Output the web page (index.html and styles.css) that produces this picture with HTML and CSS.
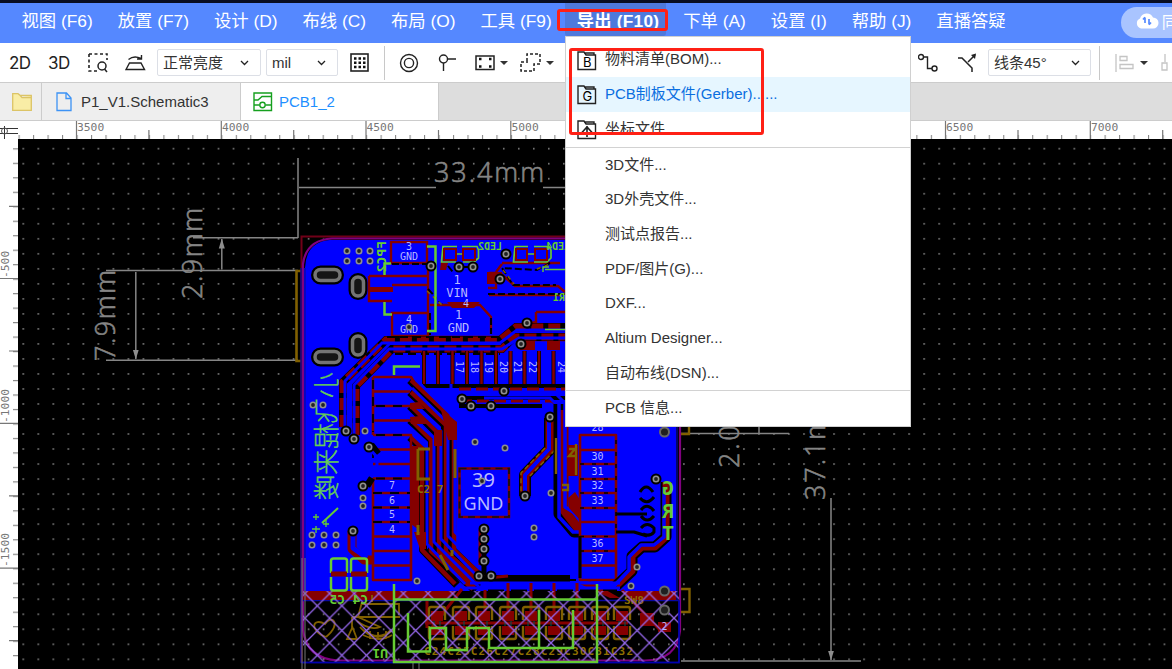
FILE: index.html
```html
<!DOCTYPE html>
<html lang="zh-CN">
<head>
<meta charset="utf-8">
<title>PCB1_2</title>
<link rel="stylesheet" href="styles.css">
</head>
<body>
<div class="app">
<nav class="menubar">
<span>视图 (F6)</span><span>放置 (F7)</span><span>设计 (D)</span><span>布线 (C)</span><span>布局 (O)</span><span>工具 (F9)</span><span class="current"><b>导出 (F10)</b></span><span>下单 (A)</span><span>设置 (I)</span><span>帮助 (J)</span><span>直播答疑</span>
<div class="sync"><svg width="24" height="18" viewBox="0 0 24 18"><path d="M6 16.5A5.3 5.3 0 0 1 5 6.5A7 7 0 0 1 18 5.5A5.5 5.5 0 0 1 18 16.5Z" fill="#fff"/><path d="M10 11V5.500M8 7.500L10 5.300M14 7V12.500M14 12.700L16 10.500" stroke="#568aff" stroke-width="1.700" fill="none"/></svg><em>同步</em></div>
</nav>
<div class="toolbar">
<div class="tools">
<span class="dim d2">2D</span><span class="dim">3D</span>
<svg class="i-find" width="20" height="20" viewBox="0 0 20 20"><path d="M1 1H19V7M1 1V18H9" fill="none" stroke="#222" stroke-width="1.600" stroke-dasharray="3 2.500"/><circle cx="14" cy="13" r="4" fill="none" stroke="#222" stroke-width="1.500"/><path d="M16.500 16L19 19" stroke="#222" stroke-width="1.500"/></svg>
<svg class="i-flip" width="21" height="16" viewBox="0 0 21 16"><path d="M4.500 8H16L19.500 14.500H1ZM3.500 4.500Q9 0 16 3.500M16.500 0V4H12" fill="none" stroke="#222" stroke-width="1.400"/></svg>
<div class="select s1">正常亮度<svg width="9" height="6"><path d="M1 1L4.500 4.500L8 1" fill="none" stroke="#222" stroke-width="1.300"/></svg></div>
<div class="select s2">mil<svg width="9" height="6"><path d="M1 1L4.500 4.500L8 1" fill="none" stroke="#222" stroke-width="1.300"/></svg></div>
<svg class="i-grid" width="19" height="19"><rect x="1" y="1" width="17" height="17" fill="none" stroke="#222" stroke-width="1.600"/><path d="M4 5.500H16M4 9.800H16M4 14H16" stroke="#111" stroke-width="2.500" stroke-dasharray="2.500 2"/></svg>
<i class="sep"></i>
<svg class="i-via" width="20" height="20"><circle cx="10" cy="10" r="8.500" fill="none" stroke="#222" stroke-width="1.400"/><circle cx="10" cy="10" r="4.600" fill="none" stroke="#222" stroke-width="1.400"/></svg>
<svg class="i-pin" width="19" height="18"><circle cx="5.500" cy="5" r="4" fill="none" stroke="#222" stroke-width="1.400"/><path d="M9.500 5H18M5.500 9V17" stroke="#222" stroke-width="1.400"/></svg>
<svg class="i-rect" width="20" height="16"><rect x="1" y="1" width="18" height="13.500" fill="none" stroke="#222" stroke-width="1.500"/><path d="M4 4H6.500M14 4H16.500M4 11.500H6.500M14 11.500H16.500" stroke="#111" stroke-width="2.500"/></svg><i class="caret"></i>
<svg class="i-dash" width="21" height="19"><path d="M7 8V1H20V11H14V18H1V9H8" fill="none" stroke="#222" stroke-width="1.500" stroke-dasharray="3 2"/></svg><i class="caret"></i>
</div>
<div class="tools right">
<svg width="20" height="19"><circle cx="3" cy="4" r="2.500" fill="none" stroke="#222" stroke-width="1.400"/><circle cx="16.500" cy="15.500" r="2.500" fill="none" stroke="#222" stroke-width="1.400"/><path d="M5.500 4H9.500V15.500H14" fill="none" stroke="#222" stroke-width="1.400"/></svg>
<svg class="i-bend" width="20" height="20"><path d="M1 5H5L15 15V19M11 9L18 2" fill="none" stroke="#222" stroke-width="1.500"/><path d="M14 2L19 .5L18 6Z" fill="#222"/></svg>
<div class="select s3">线条45°<svg width="9" height="6"><path d="M1 1L4.500 4.500L8 1" fill="none" stroke="#222" stroke-width="1.300"/></svg></div>
<i class="sep"></i>
<svg class="i-align" width="20" height="18"><path d="M1 0V18M5 2.500H12V6.500H5ZM5 10.500H18V14.500H5Z" fill="none" stroke="#c4c4c4" stroke-width="1.300"/></svg><i class="caret"></i>
<svg class="i-dist" width="11" height="18"><path d="M4 0V8M1 9H6V16H1Z" fill="none" stroke="#c4c4c4" stroke-width="1.300"/></svg>
</div>
</div>
<div class="tabs">
<div class="tab folder"><svg width="20" height="20"><path d="M.7 18.300V1.700H6L8 3.300H19.300V18.300ZM8 3.300L10 5.500H19" fill="#f9eda6" stroke="#dcc466" stroke-width="1.300"/></svg></div>
<div class="tab doc"><svg width="16" height="20"><path d="M1 1H10.500L15 6V18.500H1ZM10 1V6.500H15" fill="none" stroke="#3d93f5" stroke-width="1.300"/></svg>P1_V1.Schematic3</div>
<div class="tab doc active"><svg width="20" height="20"><path d="M1 1H18.500V18.500H1ZM1 8H5L9 4.500H18M1 13H6.500M12.500 13H18" fill="none" stroke="#16a01f" stroke-width="1.400"/><circle cx="9.500" cy="13" r="2.700" fill="none" stroke="#16a01f" stroke-width="1.400"/></svg>PCB1_2</div>
</div>
<svg class="stage" width="1172" height="549" viewBox="0 120 1172 549">
<defs>
<pattern id="dots" x="15.900" y="141.200" width="15.015" height="15.020" patternUnits="userSpaceOnUse"><rect x="6.600" y="6.700" width="1.500" height="1.500" fill="#909090"/></pattern>
<pattern id="th" x="4.100" y="121" width="14.480" height="18" patternUnits="userSpaceOnUse"><path d="M0.500 14V18" stroke="#888" stroke-width="1.200"/></pattern>
<pattern id="tv" x="0" y="133.800" width="18" height="14.480" patternUnits="userSpaceOnUse"><path d="M13 .6H18" stroke="#888" stroke-width="1.200"/></pattern>
<pattern id="hatch" x="305" y="593.500" width="24.600" height="24.700" patternUnits="userSpaceOnUse"><path d="M0 0L24.600 24.700M24.600 0L0 24.700" stroke="#9365e8" stroke-width="1.300"/><path d="M-2 2L2 -2M22.600 26.700L26.600 22.700M-2 22.700L2 26.700M22.600 -2L26.600 2" stroke="#9365e8" stroke-width="1.300"/></pattern>
<marker id="ar" viewBox="0 0 10 7" refX="9.500" refY="3.500" markerWidth="10" markerHeight="7" markerUnits="userSpaceOnUse" orient="auto-start-reverse"><path d="M0 .5L10 3.500L0 6.500Z" fill="#8e8e8e"/></marker>
<g id="via"><circle r="2.700" fill="#222" stroke="#909090" stroke-width="1.600"/></g>
<g id="bvia"><circle r="5.500" fill="#000"/><use href="#via"/></g>
<g id="cap"><path d="M1 14V3Q1 1 3 1H15Q17 1 17 3V14M1 20V31Q1 33 3 33H15Q17 33 17 31V20" fill="none" stroke="#806000" stroke-width="2.400"/><path d="M3 5H15V15H3ZM3 20H15V29H3Z" fill="#850000"/><path d="M6 15V20M12 15V20" stroke="#055" stroke-width="1"/></g>
</defs>
<rect x="0" y="120" width="1172" height="549" fill="#fff"/>
<rect x="18" y="139" width="1154" height="530" fill="#000"/>
<rect x="18" y="139" width="1154" height="530" fill="url(#dots)"/>
<path d="M0 120.500H1172" stroke="#ccc"/>
<rect x="18" y="121" width="1154" height="18" fill="url(#th)"/><rect x="0" y="139" width="18" height="530" fill="url(#tv)"/>
<path d="M76.500 121V139M221.300 121V139M366 121V139M510.800 121V139M945.500 121V139M1090.300 121V139M0 278.500H18M0 423.300H18M0 568.100H18M148.900 130V139M293.700 130V139M438.500 130V139M1018 130V139M1162.700 130V139M9 206.300H18M9 351H18M9 495.800H18M9 640.600H18" stroke="#777" stroke-width="1.200"/>
<g class="rule"><text x="77" y="131">3500</text><text x="222" y="131">4000</text><text x="366.500" y="131">4500</text><text x="511.500" y="131">5000</text><text x="946" y="131">6500</text><text x="1091" y="131">7000</text>
<text transform="translate(9 278) rotate(-90)">-500</text><text transform="translate(9 423) rotate(-90)">-1000</text><text transform="translate(9 567) rotate(-90)">-1500</text></g>
<path d="M0 128.500H18M0 133.500H18M4.500 126V139" stroke="#333" stroke-width="1"/><circle cx="4.500" cy="131" r="3" fill="none" stroke="#555"/>

<g stroke="#858585" stroke-width="1.500" fill="none">
<path d="M298 158V238M193 237.700H298M106 270.600H298M106 360.300H298M680 433.500H789M680 661H861"/>
<path d="M436 187.500H299M543 187.500H720" marker-end="url(#ar)"/><path d="M221.800 239V269.500M135.800 272V359" marker-start="url(#ar)" marker-end="url(#ar)"/><path d="M759 410V433M831 498V660" marker-end="url(#ar)"/>
</g>
<g class="dimtext"><text x="434" y="182" textLength="110">33.4mm</text><text transform="translate(202 299) rotate(-90)" textLength="91">2.9mm</text><text transform="translate(115 361) rotate(-90)" textLength="91">7.9mm</text><text transform="translate(739 468) rotate(-90)" textLength="96">2.0mm</text><text transform="translate(825 500) rotate(-90)" textLength="110">37.1mm</text></g>
<path d="M301 271H296.500V361H301" fill="none" stroke="#806000" stroke-width="2.600"/>
<path d="M680 434H689V425M676 589H689.500V612H680M675 600V627" fill="none" stroke="#806000" stroke-width="2.400"/>

<path d="M301.500 262Q303 239 334 237H681V662H302Z" fill="#000"/>
<path d="M305 268Q306 242 330 240H676V591H303V268Z" fill="#0000ff"/>
<path d="M301.500 662V236.500H682" fill="none" stroke="#700018" stroke-width="2"/>
<path d="M303 264Q306 240 332 238.500H680V631Q677 660 645 660.500H338Q307 659 303 630Z" fill="none" stroke="#800080" stroke-width="2.200"/>
<path d="M305 268V600M302.500 600.500H679V662.500H301V268M677 240V600" stroke="#0808a0" stroke-width="1.300" fill="none"/>
<path d="M303 591H457L448 600H303ZM624 591H676V600H632Z" fill="#850000"/>
<rect x="303" y="601" width="374" height="60" fill="url(#dots)"/>

<g fill="#151515" stroke="#000" stroke-width="8"><rect x="315" y="269.500" width="25" height="11" rx="5.500"/><rect x="315" y="351.500" width="25" height="11" rx="5.500"/><rect x="352.500" y="277" width="11" height="19" rx="5.500"/><rect x="352.500" y="336" width="11" height="19" rx="5.500"/></g>
<g fill="#151515" stroke="#747474" stroke-width="3.500"><rect x="315" y="269.500" width="25" height="11" rx="5.500"/><rect x="315" y="351.500" width="25" height="11" rx="5.500"/><rect x="352.500" y="277" width="11" height="19" rx="5.500"/><rect x="352.500" y="336" width="11" height="19" rx="5.500"/></g>

<!-- upper area -->
<g fill="none" stroke="#850000" stroke-width="2.400">
<path d="M391 242H427V263H391ZM369 276H427M369 276V301H392M369 289H392M392 285H427M392 313H428V336H392ZM428 263V313M489 273H496V288L488 288M489 295H560M502 263H560M496 272L502 264M500 273L515 286H558L565 292M430 305H480L491 317V334M392 337H500L512 330H565M536 312H565M536 312V322L510 328M520 340H565"/>
</g>
<path d="M368 287H393V292H368ZM447 302H480L474 308H452ZM487 272H502V284H487ZM441 262L448 263L446 270H440ZM520 341H535V350H520ZM547 341H560V350H547Z" fill="#850000"/>
<path d="M392 264H427M428 289L442 304M430 313V335M448 266L456 276M464 267H476M550 263L537 270L502 268L513 285H556M491 318V334M488 294H565" fill="none" stroke="#000" stroke-width="2" stroke-dasharray="7 3"/>
<path d="M427 291L442 305M503 270L514 284M537 269L550 264" stroke="#806000" stroke-width="1.500" stroke-dasharray="4 4" fill="none"/>
<g fill="none"><path d="M343 427V382L386 340H500L516 327H565M356 435V386L392 349H502L514 337H565" stroke="#000" stroke-width="8"/><path d="M343 427V382L386 340H500L516 327H565M356 435V386L392 349H502L514 337H565" stroke="#850000" stroke-width="7" stroke-dasharray="12 5"/><path d="M345 430V381L382 343H500L517 330H565M354 439V385L389 349H502L519 338H565" stroke="#0000ff" stroke-width="3"/><path d="M387 337H498M395 354H500" stroke="#000" stroke-width="2" stroke-dasharray="8 5"/></g>
<rect x="437" y="273" width="50" height="28" fill="#0000ff"/>
<g stroke="#000" stroke-width="4"><path d="M424 351V384M438 351V384M452.500 351V384M467 351V384M481.500 351V384M496 351V384M510.500 351V384M524.500 351V384M539 351V384M553.500 351V384"/></g>
<g stroke="#850000" stroke-width="2.500"><path d="M424 351V384M438 351V384M452.500 351V384M467 351V384M481.500 351V384M496 351V384M510.500 351V384M524.500 351V384M539 351V384M553.500 351V384"/></g>
<path d="M423 386H565M457 398H565M459 406H542" fill="none" stroke="#000" stroke-width="4"/><path d="M459 389H565M460 401H552L564 411" fill="none" stroke="#850000" stroke-width="3" stroke-dasharray="12 5"/><path d="M459 393H555L566 404M484 398H550L562 410" stroke="#0000ff" stroke-width="3" fill="none"/>

<!-- left pads and routes -->
<g fill="none" stroke-linejoin="round">
<path d="M410 380L452 420V550L482 579H570M410 392L445 425V552L481 584M410 406L438 434V552L478 588M410 420L432 440V551L475 590M410 437L423 449V550L457 585" stroke="#000" stroke-width="8"/>
<path d="M411 380L454 420V550L483 577M411 392L446 425V552L480 582M411 406L439 434V552L476 586M411 420L431 440V551L473 589M411 437L422 448V550L455 584" stroke="#850000" stroke-width="4.500"/>
<path d="M412 376L455 418V532L485 564M412 388L448 423V536L483 571M411 402L441 431V539L480 579M411 417L434 438V542L480 588M411 433L427 448V544L465 584M451 384V415L457 421" stroke="#0000ff" stroke-width="3"/>
<path d="M373 377H411L414 382M373 377V435M373 391.500H410M373 406H410M373 420.500H410M373 435H411V580H373V478M373 449.500H410M373 464H410M373 478.500H410M373 493H410M373 507.500H410M373 522H410M373 536.500H410M373 551H410M373 565.500H410" stroke="#850000" stroke-width="2.600"/>
<path d="M373 380V432M376 406H408M376 435H408M376 478.500H410M373 493H410M373 507.500H410M373 522H410M373 449V464" stroke="#000" stroke-width="1.800" stroke-dasharray="9 8"/>
<path d="M371 445L378 454M367 486L372 478" stroke="#000" stroke-width="7"/>
<path d="M368 447L377 457V466L363 480" stroke="#0000ff" stroke-width="3"/>
<path d="M352 531V549L364 560H373" stroke="#850000" stroke-width="9"/><path d="M353 532V548L367 558" stroke="#0000ff" stroke-width="5"/>
</g>
<path d="M410 403L419 402L425 409H410ZM410 417L420 416L427 424H411ZM411 446H419V530L411 524ZM414 532H426V549H420ZM434 430H442V446H434ZM441 410L457 422V440H448Z" fill="#850000"/>
<path d="M418 449V479H430M418 449H430M418 452V478M455 449V478M418 525V535M440 555L448 570M452 550V556" fill="none" stroke="#806000" stroke-width="3"/>
<g stroke="#000" stroke-width="5"><path d="M484 530V575"/></g><path d="M480 530V565M487 578L508 576" stroke="#850000" stroke-width="3"/>
<path d="M459.500 468.500H509V517H459.500Z" fill="#0000ff" stroke="#850000" stroke-width="2.500"/><path d="M459.500 468.500H509V517H459.500Z" fill="none" stroke="#111" stroke-width="1.700" stroke-dasharray="7 5"/>

<!-- right pads and routes -->
<g fill="none" stroke-linejoin="round">
<path d="M550 418V449L525 475V496" stroke="#000" stroke-width="12"/><path d="M550 418V449L525 475V496" stroke="#850000" stroke-width="9"/><path d="M545 448L521 473V494M555 450L530 476" stroke="#806000" stroke-width="1.500" stroke-dasharray="5 3"/><path d="M549 418V449L525 475V494" stroke="#0000ff" stroke-width="4"/>
<path d="M559 404V514L574 532H580" stroke="#000" stroke-width="11"/><path d="M564 410V510L577 527H580" stroke="#850000" stroke-width="9"/><path d="M559 404V517L573 532H580M565 404V507L578 515H640" stroke="#0000ff" stroke-width="3.500"/>
<path d="M580 435H616V450H580ZM580 450V580H616V435M580 464H616M580 479H616M580 493H616M580 508H616M580 522H616M580 536.500H616M580 551H616M580 565.500H616" stroke="#850000" stroke-width="2.600"/>
<path d="M580 464H616M580 479H616M580 493H616M580 508H616M580 536.500H616M580 551H616M616 440V530" stroke="#000" stroke-width="1.500" stroke-dasharray="4 8"/>
<path d="M616 514H647M616 532H634L647 536M580 536V578" stroke="#000" stroke-width="3"/>
<path d="M640 492Q646 482 653 492M640 498Q647 506 654 497M641 510Q647 502 654 511M641 516Q647 524 654 516M641 528Q647 521 654 528V532Q650 537 643 534" stroke="#000" stroke-width="3"/>
<path d="M666 482V537L655 547H642L632 556V571L616 586" stroke="#000" stroke-width="11"/><path d="M666 482V537L655 547H642L632 556V571L616 586" stroke="#850000" stroke-width="7"/><path d="M664 487V537L654 545H641L629 557V570L614 586" stroke="#0000ff" stroke-width="3.500"/>
</g>
<path d="M567 445H578V476H568ZM568 498L575 492L580 500V520L569 508ZM590 581L620 598H610L580 584Z" fill="#850000"/>
<path d="M556 438V474M576 444V475M569 449H575L569 456H575M562 485H568V490H562" fill="none" stroke="#806000" stroke-width="2.300"/>
<path d="M476 580H576M488 590H617" stroke="#000" stroke-width="2" stroke-dasharray="16 7"/><path d="M470 583H620M460 588H620" stroke="#0000ff" stroke-width="3"/>

<!-- lower area -->
<path d="M485 590V616M508 583V616M531 583V616M554 583V616M577 583V616M462 589L430 630M427 601V628M622 590L660 630M425 623H628" stroke="#850000" stroke-width="3" fill="none"/>
<use href="#cap" x="428" y="606"/><use href="#cap" x="452" y="606"/><use href="#cap" x="475" y="606"/><use href="#cap" x="499" y="606"/><use href="#cap" x="522" y="606"/><use href="#cap" x="545" y="606"/><use href="#cap" x="568" y="606"/><use href="#cap" x="591" y="606"/><use href="#cap" x="613" y="606"/>
<path d="M640 613H654V626H640ZM658 622H671V632H658Z" fill="#850000"/>
<path d="M326 637C308 630 313 617 325 624C331 614 343 623 326 637M352 617H400M362 602L358 617L380 627Q370 631 357 621M361 604H399V614M360 627Q376 646 395 628M352 617V628L347 639H357L352 626M363 630Q379 642 391 630M363 635Q380 643 392 635M370 631V639M378 632V640M386 631V639M372 595V602" fill="none" stroke="#806000" stroke-width="1.800"/>
<g class="refs"><text x="424" y="655" textLength="209">C24C25C26C27C28C29C30C31C32</text><text x="624" y="604">SW8</text><text x="417" y="493">C2 7</text></g>
<path d="M303 591H679V662H303Z" fill="url(#hatch)"/>
<path d="M302 662.500H679V600.500" stroke="#0000b0" stroke-width="1.500" fill="none"/>
<path d="M302 669V558M305 669V558M413 663V669M419 663V669" stroke="#777" stroke-width="1"/>

<g fill="none" stroke="#66cc33" stroke-width="2.500">
<path d="M394 584V662H597V584M394 599.500H597M408 613V651.500H430V628H446V650H467V628H489V648H573V610M539 610V648"/>
<path d="M391 263.500H384.500V275M384.500 302V314.500H392M427 246.500H435.500V331H427M394 375V366.500H420"/>
<path d="M331 573V561Q331 558.500 333.500 558.500H344.500Q347 558.500 347 561V573M331 577V588Q331 590.500 333.500 590.500H344.500Q347 590.500 347 588V577M351 573V561Q351 558.500 353.500 558.500H364.500Q367 558.500 367 561V573M351 577V588Q351 590.500 353.500 590.500H364.500Q367 590.500 367 588V577"/>
<path d="M457 246.500H443L441.500 262H456M462 246.500H477L478.500 250V258L474 262H463M457 254H463M528 246.500H515L513.500 262H528M534 246.500H549L551 250V258L547 262H534M528 254H534" stroke-width="1.700"/>
<path d="M543 272V267H549M545 269.500H565M545 329.500H565" stroke-width="1.400"/>
<path d="M322 523L338 508" stroke-width="2"/><path d="M316 514V520M313 517H319M326 520V527M323 524H329M316 526V533M312 529H320" stroke-width="1.300"/>
</g>
<path d="M444 249H456V260H444ZM463 249H475V260H463ZM516 249H527V260H516ZM535 249H547V260H535Z" fill="none" stroke="#850000" stroke-width="2"/>
<path d="M331 571.500H347V576.500H331ZM351 571.500H367V576.500H351Z" fill="#850000"/>
<g class="silk"><text transform="matrix(-1 0 0 1 345 604)">C5</text><text transform="matrix(-1 0 0 1 368 604)">C4</text><text transform="translate(388 649) rotate(180)">U1</text><text class="sm" transform="matrix(-1 0 0 1 502 250)">LED2</text><text class="sm" transform="matrix(-1 0 0 1 570 250)">LED4</text><text class="sm" transform="matrix(-1 0 0 1 565 301)">R1</text><text transform="matrix(0 1 1 0 386 241)">FPC2</text><text class="cn" transform="matrix(0 1 1 0 335.500 372)">小飞棍来喽</text>
<text class="big" transform="matrix(-1 0 0 1 674 495)">G</text><text class="big" transform="matrix(-1 0 0 1 674 518)">R</text><text class="big" transform="matrix(-1 0 0 1 674 540)">T</text></g>
<g class="pads"><text x="409" y="250">3</text><text x="409" y="260">GND</text><text x="409" y="323">4</text><text x="409" y="333">GND</text><text class="md" x="457" y="284">1</text><text class="md" x="457" y="297">VIN</text><text class="md" x="458.500" y="319">1</text><text class="md" x="458.500" y="332">GND</text><text x="466" y="307">4</text>
<text class="lg" x="483.500" y="487">39</text><text class="lg gnd" x="483.500" y="510">GND</text>
<text x="392" y="489">7</text><text x="392" y="503.500">6</text><text x="392" y="518">5</text><text x="392" y="532.500">4</text>
<text x="597.500" y="431">28</text><text x="597.500" y="460">30</text><text x="597.500" y="474.500">31</text><text x="597.500" y="489">32</text><text x="597.500" y="503.500">33</text><text x="597.500" y="547">36</text><text x="597.500" y="561.500">37</text><text x="664.500" y="630">2</text>
<text transform="translate(456 367) rotate(90)">17</text><text transform="translate(470.500 367) rotate(90)">18</text><text transform="translate(485 367) rotate(90)">19</text><text transform="translate(499.500 367) rotate(90)">20</text><text transform="translate(514 367) rotate(90)">21</text><text transform="translate(528.500 367) rotate(90)">22</text><text transform="translate(557.500 367) rotate(90)">24</text></g>
<use href="#via" x="347" y="251"/><use href="#via" x="359" y="251"/><use href="#via" x="370" y="251"/><use href="#via" x="347" y="261"/><use href="#via" x="359" y="261"/><use href="#via" x="370" y="261"/>
<use href="#bvia" x="431" y="266"/><use href="#bvia" x="459" y="267"/><use href="#bvia" x="473" y="267"/><use href="#bvia" x="506" y="254"/><use href="#bvia" x="500" y="279"/><use href="#bvia" x="527" y="323"/><use href="#bvia" x="521" y="344"/><use href="#via" x="409" y="327"/>
<use href="#via" x="313" y="405"/><use href="#via" x="323" y="405"/><use href="#bvia" x="346" y="431"/><use href="#bvia" x="354" y="439"/><use href="#via" x="365" y="431"/><use href="#bvia" x="369" y="447"/><use href="#bvia" x="363" y="486"/><use href="#via" x="363" y="498"/><use href="#via" x="363" y="506"/>
<use href="#bvia" x="462" y="399"/><use href="#bvia" x="471" y="406"/><use href="#bvia" x="491" y="406"/><use href="#bvia" x="504" y="391"/><use href="#via" x="475" y="442"/><use href="#via" x="505" y="448"/><use href="#via" x="482" y="481"/><use href="#bvia" x="550" y="417"/><use href="#bvia" x="525" y="496"/><use href="#via" x="551" y="493"/>
<use href="#via" x="312" y="535"/><use href="#via" x="324" y="535"/><use href="#via" x="336" y="535"/><use href="#via" x="312" y="545"/><use href="#via" x="324" y="545"/><use href="#via" x="336" y="545"/><use href="#bvia" x="353" y="531"/><use href="#via" x="417" y="581"/>
<use href="#bvia" x="484" y="529"/><use href="#bvia" x="484" y="539"/><use href="#bvia" x="484" y="549"/><use href="#bvia" x="484" y="561"/><use href="#bvia" x="479" y="576"/><use href="#bvia" x="491" y="576"/><use href="#via" x="534" y="528"/><use href="#via" x="534" y="537"/><use href="#bvia" x="656" y="479"/><use href="#via" x="637" y="567"/><use href="#via" x="631" y="586"/>
<g fill="#202020" stroke="#686868" stroke-width="2"><circle cx="664.500" cy="432" r="4.500"/><circle cx="664.500" cy="591" r="4.500"/><circle cx="664.500" cy="610" r="4.500"/></g>
</svg>
</div>
<div class="dropdown">
<div class="item first"><svg class="ico" width="20" height="20"><path d="M1 18.500V1H7L9 4H18.500V18.500ZM7 2H17V4" fill="none" stroke="#222" stroke-width="1.400"/><text x="6" y="16">B</text></svg>物料清单(BOM)...</div>
<div class="item hover"><svg class="ico" width="20" height="20"><path d="M1 18.500V1H7L9 4H18.500V18.500ZM7 2H17V4" fill="none" stroke="#222" stroke-width="1.400"/><text x="5.500" y="16">G</text></svg>PCB制板文件(Gerber)......</div>
<div class="item"><svg class="ico" width="20" height="20"><path d="M1 18.500V1H7L9 4H18.500V18.500ZM7 2H17V4" fill="none" stroke="#222" stroke-width="1.400"/><path d="M10 6V17M4.500 13L10 7L15.500 13M7 13H13" fill="none" stroke="#222" stroke-width="1.600"/></svg><span class="cut">坐标文件</span></div>
<hr>
<div class="item">3D文件...</div><div class="item">3D外壳文件...</div><div class="item">测试点报告...</div><div class="item">PDF/图片(G)...</div><div class="item">DXF...</div><div class="item">Altium Designer...</div><div class="item">自动布线(DSN)...</div>
<hr class="last">
<div class="item">PCB 信息...</div>
</div>
<div class="mark m1"></div><div class="mark m2"></div>
</body>
</html>
```
FILE: styles.css
```css
* { box-sizing: border-box; }
body { margin: 0; width: 1172px; height: 669px; overflow: hidden; font: 15px "Liberation Sans", "Noto Sans CJK SC", sans-serif; color: #333; }
.app { display: flex; flex-direction: column; height: 669px; }
.menubar { height: 43px; flex: none; border-top: 3px solid #080d22; background: #5588ff; display: flex; gap: 25px; padding-left: 21.500px; color: #fff; font-size: 17.33px; line-height: 37px; white-space: nowrap; overflow: hidden; }
.menubar > span { flex: none; }
.menubar .current { background: #4e79dc; width: 101px; height: 33px; margin: 0 -7.500px 0 -12px; padding-left: 12px; border-radius: 0 0 3px 3px; letter-spacing: .2px; }
.menubar .current b { display: block; height: 25px; overflow: hidden; }
.sync { margin-left: 90px; margin-top: 4px; width: 90px; flex: none; height: 31px; border-radius: 16px; background: #a9c4ff; display: flex; align-items: center; gap: 3px; padding-left: 14px; }
.sync svg { flex: none; margin-top: -4px; }
.sync em { font-style: normal; font-size: 16px; }
.toolbar { height: 40px; flex: none; border-bottom: 1px solid #ccc; background: #fff; display: flex; justify-content: space-between; }
.tools { display: flex; align-items: center; }
.tools.right { width: 254px; overflow: hidden; }
.tools svg, .tools i { flex: none; }
.dim { font: 17px Inter, sans-serif; color: #222; width: 22px; margin-right: 18px; letter-spacing: -.5px; }
.dim.d2 { margin-left: 9px; margin-right: 17px; }
.i-flip { margin-left: 17px; }
.select { height: 27px; border: 1px solid #dcdfe6; border-radius: 2px; padding: 0 11px 0 5px; display: flex; align-items: center; justify-content: space-between; color: #333; white-space: nowrap; line-height: 25px; }
.s1 { width: 104px; margin-left: 11px; }
.s2 { width: 72px; margin-left: 5px; }
.s3 { width: 104px; margin-left: 11px; }
.i-grid { margin-left: 12px; }
.sep { width: 1px; height: 34px; background: #c8c8c8; margin-left: 15px; }
.i-via { margin-left: 14px; }
.i-pin { margin-left: 19px; }
.i-rect { margin-left: 18px; }
.i-dash { margin-left: 12px; }
.caret { border: 4px solid transparent; border-top: 4px solid #333; border-bottom: 0; margin-left: 5px; }
.i-bend { margin-left: 19px; }
.right .select { padding-right: 10px; }
.right .sep { margin-left: 8px; }
.i-align { margin-left: 15px; }
.i-dist { margin-left: 13px; }
.tabs { height: 37px; flex: none; display: flex; background: #ddd; }
.tab { background: #eee; border-right: 1px solid #ccc; display: flex; align-items: center; }
.folder { width: 42px; padding-left: 12px; }
.doc { width: 199px; padding-left: 14px; gap: 9px; }
.doc.active { background: #fff; width: 198px; padding-left: 12px; gap: 6px; color: #1e8fff; }
.stage { display: block; flex: none; }
.rule { font: 11.3px "DejaVu Sans Mono", monospace; fill: #777; }
.dimtext { font: 300 27px "Open Sans", sans-serif; fill: #858585; stroke: #858585; stroke-width: .6px; }
.refs { font: bold 11px "DejaVu Sans Mono", monospace; fill: #907000; }
.silk { font: bold 13px "DejaVu Sans Mono", monospace; fill: #66cc33; }
.silk .sm { font-size: 10px; }
.silk .big { font-size: 20px; }
.silk .cn { font: 300 25.700px "Noto Sans CJK SC", sans-serif; fill: #66cc55; stroke: #66cc55; stroke-width: .4px; }
.pads { font: 10px "DejaVu Sans Mono", monospace; fill: #b8b8ff; text-anchor: middle; }
.pads .md { font-size: 12px; }
.pads .lg { font: 20px "Noto Sans", sans-serif; }
.pads .gnd { font-size: 18px; }
.dropdown { position: absolute; left: 565px; top: 36px; width: 346px; height: 391px; background: #fff; border: 1px solid #d0d0d0; padding-top: 5.500px; }
.item { height: 34.700px; line-height: 34px; padding-left: 39px; position: relative; white-space: nowrap; }
.item.first { line-height: 32px; }
.item.hover { background: #e6f6ff; color: #0a6ee0; }
.ico { position: absolute; left: 11px; top: 8px; font: 13px Inter, sans-serif; }
.cut { display: block; height: 22px; overflow: hidden; }
hr { border: 0; border-top: 1px solid #d2d2d2; margin: 0; }
hr.last { margin: -.5px 0 0; }
.mark { position: absolute; border: 3px solid #ff2015; border-radius: 3px; }
.m1 { left: 557px; top: 9px; width: 111px; height: 22px; }
.m2 { left: 569px; top: 48px; width: 195px; height: 87px; }
```
